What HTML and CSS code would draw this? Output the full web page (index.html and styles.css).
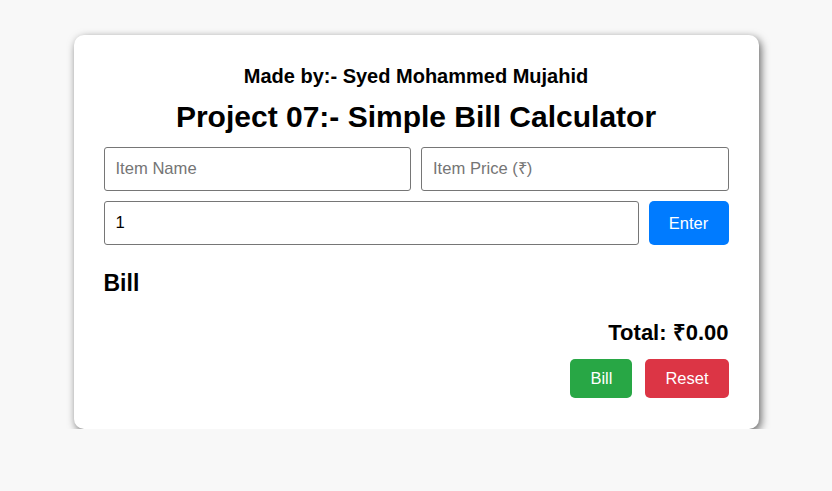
FILE: index.html
```html
<!DOCTYPE html>
<html lang="en">
<head>
<meta charset="utf-8">
<title>Simple Bill Calculator</title>
<link rel="stylesheet" href="styles.css">
</head>
<body>
<div class="card">
  <h3 class="author">Made by:- Syed Mohammed Mujahid</h3>
  <h1 class="title">Project 07:- Simple Bill Calculator</h1>
  <div class="row">
    <input class="field" type="text" placeholder="Item Name">
    <input class="field" type="text" placeholder="Item Price (₹)">
  </div>
  <div class="row">
    <input class="field" type="text" value="1">
    <button class="btn btn-blue">Enter</button>
  </div>
  <h2 class="bill-heading">Bill</h2>
  <div class="bill-list"></div>
  <div class="total">Total: ₹0.00</div>
  <div class="actions">
    <button class="btn btn-green">Bill</button>
    <button class="btn btn-red">Reset</button>
  </div>
</div>
</body>
</html>
```
FILE: styles.css
```css
* { box-sizing: border-box; }
html, body { margin: 0; padding: 0; }
body {
  background: #f8f8f8;
  font-family: "Liberation Sans", Arial, sans-serif;
  color: #000;
  padding-top: 35px;
}
.card {
  width: 685px;
  margin: 0 auto;
  background: #fff;
  border-radius: 10px;
  padding: 30px 30px 31px;
  box-shadow: 2px 3px 8px rgba(0,0,0,0.6);
}
.author {
  margin: 0;
  text-align: center;
  font-size: 20px;
  line-height: 23px;
  font-weight: bold;
}
.title {
  margin: 11px 0 13px;
  text-align: center;
  font-size: 30px;
  line-height: 35px;
  font-weight: bold;
}
.row {
  display: flex;
  gap: 10px;
  margin-bottom: 10px;
}
.field {
  flex: 1;
  min-width: 0;
  height: 44px;
  border: 1px solid #767676;
  border-radius: 3px;
  padding: 0 11px;
  font-family: "Liberation Sans", Arial, sans-serif;
  font-size: 16.6px;
  color: #000;
}
.field::placeholder { color: #757575; }
.btn {
  border: none;
  border-radius: 5px;
  color: #fff;
  font-family: "Liberation Sans", Arial, sans-serif;
  font-size: 16.5px;
  height: 39px;
  padding: 0 20px;
  line-height: 39px;
}
.btn-blue { background: #007bff; padding: 0; width: 80px; flex: none; height: auto; }
.btn-green { background: #28a745; }
.btn-red { background: #dc3545; }
.bill-heading {
  margin: 25px 0 0;
  font-size: 23px;
  line-height: 27px;
  font-weight: bold;
}
.bill-list { height: 23px; }
.total {
  text-align: right;
  font-size: 22px;
  line-height: 25px;
  font-weight: bold;
}
.actions {
  display: flex;
  justify-content: flex-end;
  gap: 13px;
  margin-top: 14px;
}
```
